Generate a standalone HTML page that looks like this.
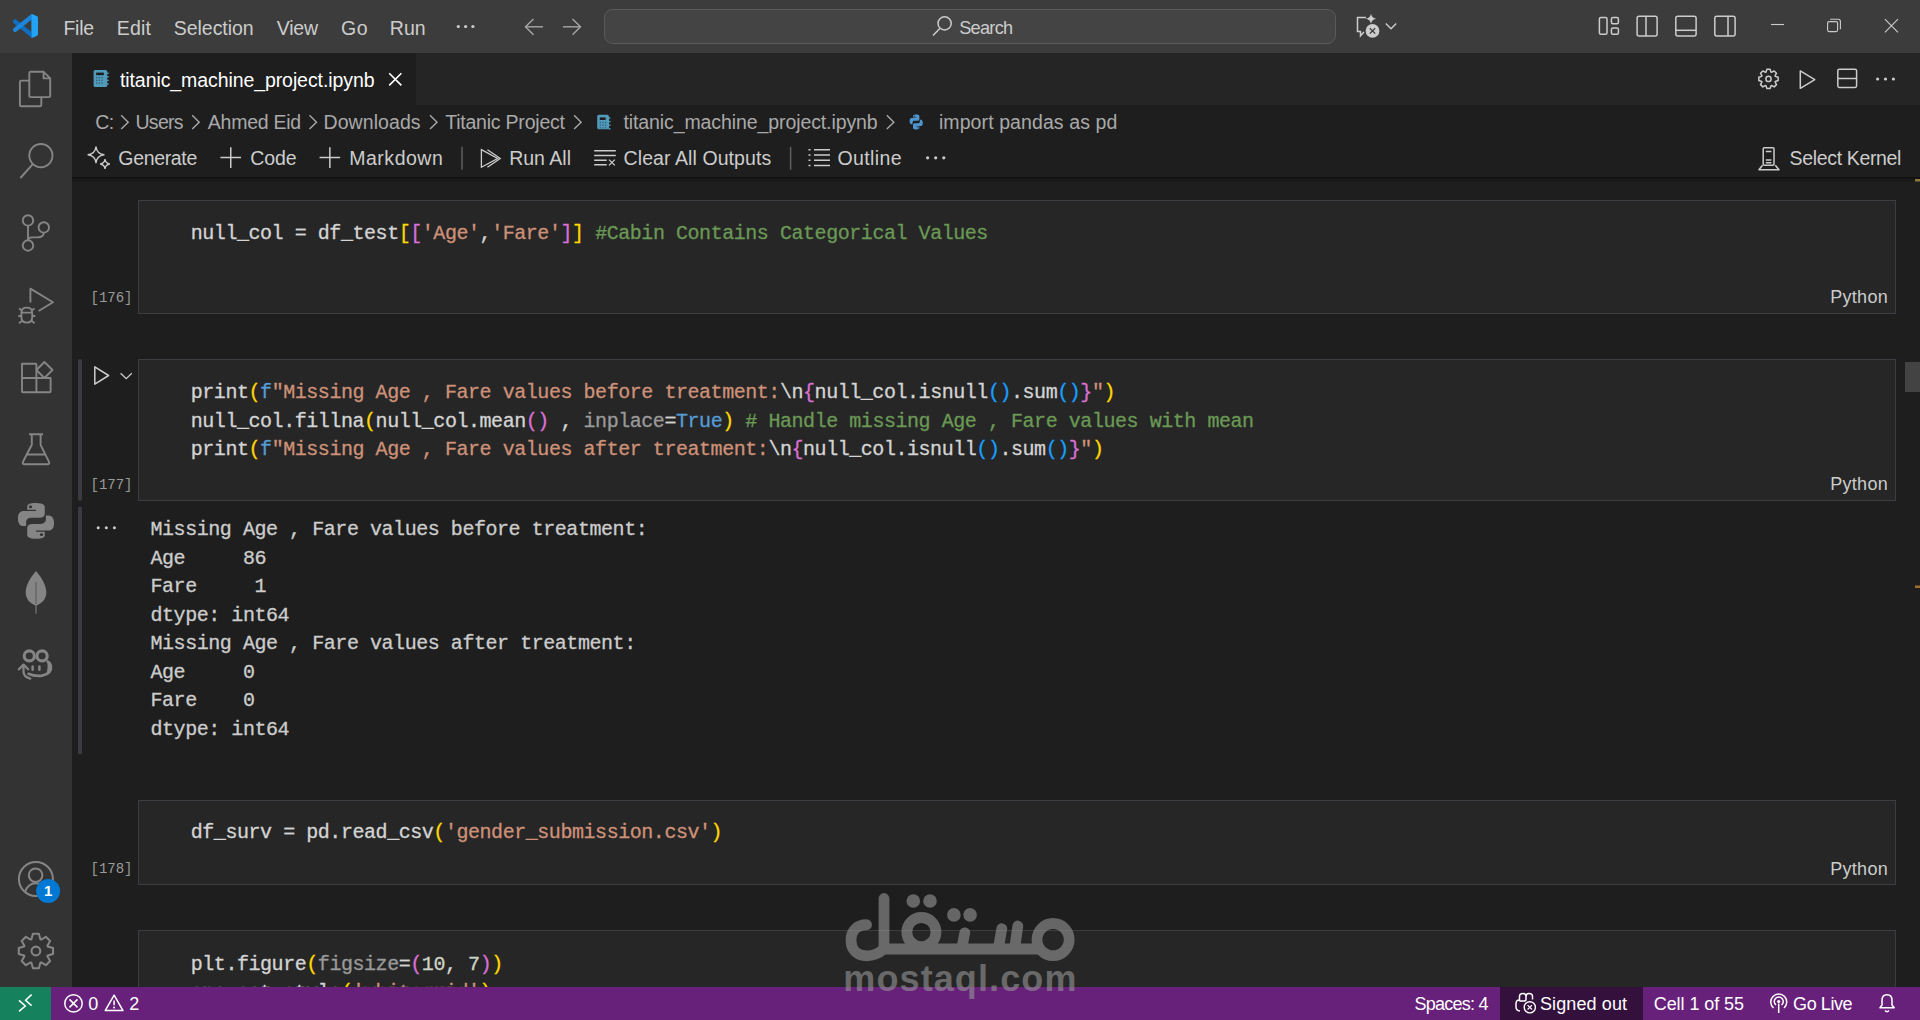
<!DOCTYPE html>
<html><head><meta charset="utf-8"><title>VS Code</title>
<style>
html,body{margin:0;padding:0;}
body{width:1920px;height:1020px;overflow:hidden;background:#1e1e1e;position:relative;font-family:"Liberation Sans",sans-serif;}
svg{position:absolute;left:0;top:0;}
.t{position:absolute;white-space:pre;line-height:1;}
.code{position:absolute;white-space:pre;font-family:"Liberation Mono",monospace;font-size:20px;line-height:28.5px;letter-spacing:-0.45px;-webkit-text-stroke:0.3px currentColor;}
.ec{position:absolute;white-space:pre;font-family:"Liberation Mono",monospace;font-size:14px;line-height:1;color:#9b9b9b;letter-spacing:0px;}
.wm{position:absolute;left:0;top:0;width:1920px;height:1020px;opacity:0.6;}
</style></head><body>
<svg width="1920" height="1020" viewBox="0 0 1920 1020"><defs><linearGradient id="shd" x1="0" y1="0" x2="0" y2="1"><stop offset="0" stop-color="#000" stop-opacity="0.55"/><stop offset="1" stop-color="#000" stop-opacity="0"/></linearGradient></defs>
<rect x="0" y="0" width="1920" height="53" fill="#3c3c3c"/>
<rect x="0" y="53" width="72" height="934" fill="#333333"/>
<rect x="72" y="53" width="1848" height="52" fill="#252526"/>
<rect x="72" y="53" width="344" height="52" fill="#1e1e1e"/>
<rect x="72" y="177" width="1848" height="1.6" fill="#111111"/><rect x="72" y="178.6" width="1848" height="2.6" fill="#181818"/><rect x="72" y="181" width="1848" height="1" fill="#1c1c1c"/>
<rect x="138.5" y="200.5" width="1757" height="113" fill="#262626" stroke="#3c3c42" stroke-width="1"/>
<rect x="138.5" y="359.5" width="1757" height="141" fill="#262626" stroke="#3c3c42" stroke-width="1"/>
<rect x="138.5" y="800.5" width="1757" height="84" fill="#262626" stroke="#3c3c42" stroke-width="1"/>
<rect x="138.5" y="930.5" width="1757" height="120" fill="#262626" stroke="#3c3c42" stroke-width="1"/>
<rect x="78" y="359" width="4" height="142" rx="2" fill="#3a3a40"/>
<rect x="78" y="506.5" width="4" height="248" rx="2" fill="#3a3a40"/>
<rect x="1905" y="362" width="15" height="30" fill="#434343"/>
<rect x="1915" y="179" width="5" height="2.5" fill="#8c7a3c"/>
<rect x="1915" y="585.5" width="5" height="2.5" fill="#a56d2c"/>
<rect x="0" y="987" width="1920" height="33" fill="#68217a"/>
<rect x="0" y="987" width="51" height="33" fill="#16825d"/>
<rect x="1500" y="987" width="143" height="33" fill="#34113d"/>
<path d="M31.6 13.9 L36.8 16.3 Q37.9 16.9 37.9 18.2 L37.9 33.8 Q37.9 35.1 36.8 35.7 L31.6 38.1 Z" fill="#23a3f5"/>
<path d="M15.2 21.6 L32 35.2" stroke="#0f6fc2" stroke-width="4.4" stroke-linecap="round"/>
<path d="M15.2 29.8 L32 16.5" stroke="#1b86dc" stroke-width="4.4" stroke-linecap="round"/>
<path d="M31.6 13.9 L36.8 16.3 Q37.9 16.9 37.9 18.2 L37.9 33.8 Q37.9 35.1 36.8 35.7 L31.6 38.1 Z" fill="#23a3f5"/>
<circle cx="458.3" cy="26.5" r="1.6" fill="#cccccc"/>
<circle cx="465.6" cy="26.5" r="1.6" fill="#cccccc"/>
<circle cx="472.9" cy="26.5" r="1.6" fill="#cccccc"/>
<g stroke="#a6a6a6" stroke-width="1.4" fill="none"><path d="M525.5 26.8 H543"/><path d="M533.5 18.9 L525.5 26.8 L533.5 34.7"/><path d="M563 26.8 H580.5"/><path d="M572.5 18.9 L580.5 26.8 L572.5 34.7"/></g>
<rect x="604.5" y="9.5" width="731" height="34" rx="8" fill="#444444" stroke="#5a5a5a"/>
<g stroke="#cccccc" stroke-width="1.5" fill="none"><circle cx="944.6" cy="23.4" r="6.6"/><path d="M939.8 28.4 L933 35.6"/></g>
<g stroke="#cccccc" stroke-width="1.5" fill="none"><path d="M1366 17.5 H1357.5 V31.5 H1360.5 V35.8 L1364 32"/></g>
<path d="M1371 13.8 Q1371.8 18.2 1376.5 18.8 Q1371.8 19.4 1371 23.8 Q1370.2 19.4 1365.5 18.8 Q1370.2 18.2 1371 13.8Z" fill="#cccccc"/>
<circle cx="1372.5" cy="30.9" r="6.9" fill="#cccccc"/><path d="M1369.8 28.2 L1375.2 33.6 M1375.2 28.2 L1369.8 33.6" stroke="#3c3c3c" stroke-width="1.3"/>
<path d="M1385.8 23.6 L1391 28.8 L1396.2 23.6" stroke="#cccccc" stroke-width="1.4" fill="none"/>
<g stroke="#cccccc" stroke-width="1.5" fill="none"><rect x="1599.4" y="17.6" width="7.6" height="16.6" rx="1.5"/><rect x="1611.4" y="17.6" width="7" height="6.2" rx="1.5"/><rect x="1611.4" y="28" width="7" height="6.2" rx="1.5"/><rect x="1637.1" y="16.2" width="20" height="19.8" rx="2"/><path d="M1646 16.2 V36"/><rect x="1675.8" y="16.2" width="20.3" height="19.8" rx="2"/><path d="M1675.8 30.3 H1696.1"/><rect x="1714.8" y="16.2" width="20.3" height="19.8" rx="2"/><path d="M1728 16.2 V36"/></g>
<g stroke="#cccccc" stroke-width="1.1" fill="none"><path d="M1771 24.5 H1784"/><rect x="1827.6" y="21.6" width="10" height="10" rx="1.5"/><path d="M1830.2 19.3 H1838.2 Q1840.4 19.3 1840.4 21.5 V29.3"/><path d="M1884.9 19.2 L1898 32.3 M1898 19.2 L1884.9 32.3"/></g>
<rect x="93.6" y="70" width="13.6" height="17" rx="1.6" fill="#519aba"/><rect x="96.19999999999999" y="72.6" width="7.6" height="2.6" fill="#1e1e1e"/><rect x="96.0" y="77.0" width="1.3" height="1.3" fill="#2d5f78"/><rect x="98.7" y="77.0" width="1.3" height="1.3" fill="#2d5f78"/><rect x="101.4" y="77.0" width="1.3" height="1.3" fill="#2d5f78"/><rect x="96.0" y="79.7" width="1.3" height="1.3" fill="#2d5f78"/><rect x="98.7" y="79.7" width="1.3" height="1.3" fill="#2d5f78"/><rect x="101.4" y="79.7" width="1.3" height="1.3" fill="#2d5f78"/><rect x="96.0" y="82.4" width="1.3" height="1.3" fill="#2d5f78"/><rect x="98.7" y="82.4" width="1.3" height="1.3" fill="#2d5f78"/><rect x="101.4" y="82.4" width="1.3" height="1.3" fill="#2d5f78"/><rect x="106.69999999999999" y="72.5" width="2" height="1.4" fill="#519aba"/><rect x="106.69999999999999" y="76.1" width="2" height="1.4" fill="#519aba"/><rect x="106.69999999999999" y="79.7" width="2" height="1.4" fill="#519aba"/><rect x="106.69999999999999" y="83.3" width="2" height="1.4" fill="#519aba"/>
<path d="M389.2 73.2 L401.4 85.4 M401.4 73.2 L389.2 85.4" stroke="#ffffff" stroke-width="1.6"/>
<path d="M1778.17 77.30 L1778.17 80.50 L1775.23 81.46 L1775.07 81.85 L1776.47 84.60 L1774.20 86.87 L1771.45 85.47 L1771.06 85.63 L1770.10 88.57 L1766.90 88.57 L1765.94 85.63 L1765.55 85.47 L1762.80 86.87 L1760.53 84.60 L1761.93 81.85 L1761.77 81.46 L1758.83 80.50 L1758.83 77.30 L1761.77 76.34 L1761.93 75.95 L1760.53 73.20 L1762.80 70.93 L1765.55 72.33 L1765.94 72.17 L1766.90 69.23 L1770.10 69.23 L1771.06 72.17 L1771.45 72.33 L1774.20 70.93 L1776.47 73.20 L1775.07 75.95 L1775.23 76.34 Z" stroke="#cccccc" stroke-width="1.5" fill="none" stroke-linejoin="round"/><circle cx="1768.5" cy="78.9" r="2.6" stroke="#cccccc" stroke-width="1.5" fill="none"/>
<path d="M1800.3 70.9 L1814.8 79.6 L1800.3 88.3 Z" stroke="#cccccc" stroke-width="1.5" fill="none" stroke-linejoin="round"/>
<rect x="1837.8" y="69.2" width="18.8" height="18.2" rx="1.6" stroke="#cccccc" stroke-width="1.5" fill="none"/><path d="M1837.8 78.5 H1856.6" stroke="#cccccc" stroke-width="1.5"/>
<circle cx="1877.6" cy="79" r="1.6" fill="#cccccc"/>
<circle cx="1885.5" cy="79" r="1.6" fill="#cccccc"/>
<circle cx="1893.4" cy="79" r="1.6" fill="#cccccc"/>
<path d="M121.19999999999999 115.3 L128.2 122.2 L121.19999999999999 129" stroke="#a9a9a9" stroke-width="1.4" fill="none"/>
<path d="M192.2 115.3 L199.2 122.2 L192.2 129" stroke="#a9a9a9" stroke-width="1.4" fill="none"/>
<path d="M309.5 115.3 L316.5 122.2 L309.5 129" stroke="#a9a9a9" stroke-width="1.4" fill="none"/>
<path d="M430.0 115.3 L437.0 122.2 L430.0 129" stroke="#a9a9a9" stroke-width="1.4" fill="none"/>
<path d="M574.1 115.3 L581.1 122.2 L574.1 129" stroke="#a9a9a9" stroke-width="1.4" fill="none"/>
<path d="M886.85 115.3 L893.85 122.2 L886.85 129" stroke="#a9a9a9" stroke-width="1.4" fill="none"/>
<rect x="597.2" y="114.8" width="11.8" height="14.4" rx="1.6" fill="#519aba"/><rect x="599.8000000000001" y="117.39999999999999" width="5.800000000000001" height="2.6" fill="#1e1e1e"/><rect x="599.6" y="121.8" width="1.3" height="1.3" fill="#2d5f78"/><rect x="602.3000000000001" y="121.8" width="1.3" height="1.3" fill="#2d5f78"/><rect x="605.0" y="121.8" width="1.3" height="1.3" fill="#2d5f78"/><rect x="599.6" y="124.5" width="1.3" height="1.3" fill="#2d5f78"/><rect x="602.3000000000001" y="124.5" width="1.3" height="1.3" fill="#2d5f78"/><rect x="605.0" y="124.5" width="1.3" height="1.3" fill="#2d5f78"/><rect x="599.6" y="127.2" width="1.3" height="1.3" fill="#2d5f78"/><rect x="602.3000000000001" y="127.2" width="1.3" height="1.3" fill="#2d5f78"/><rect x="605.0" y="127.2" width="1.3" height="1.3" fill="#2d5f78"/><rect x="608.5" y="117.3" width="2" height="1.4" fill="#519aba"/><rect x="608.5" y="120.89999999999999" width="2" height="1.4" fill="#519aba"/><rect x="608.5" y="124.5" width="2" height="1.4" fill="#519aba"/><rect x="608.5" y="128.1" width="2" height="1.4" fill="#519aba"/>
<g transform="translate(908.2,114.0) scale(1.0,1.0)"><path d="M7.9 0.5 C4.6 0.5 4.8 1.9 4.8 1.9 V3.4 H8 V3.9 H3.5 C3.5 3.9 1.4 3.7 1.4 7 C1.4 10.3 3.3 10.2 3.3 10.2 H4.4 V8.6 C4.4 8.6 4.3 6.7 6.2 6.7 H9.4 C9.4 6.7 11.2 6.7 11.2 5 V2.2 C11.2 2.2 11.5 0.5 7.9 0.5 Z" fill="#4e94ce"/><path d="M7.9 0.5 C4.6 0.5 4.8 1.9 4.8 1.9 V3.4 H8 V3.9 H3.5 C3.5 3.9 1.4 3.7 1.4 7 C1.4 10.3 3.3 10.2 3.3 10.2 H4.4 V8.6 C4.4 8.6 4.3 6.7 6.2 6.7 H9.4 C9.4 6.7 11.2 6.7 11.2 5 V2.2 C11.2 2.2 11.5 0.5 7.9 0.5 Z" fill="#4e94ce" transform="rotate(180 8 8)"/><circle cx="6" cy="2.2" r="0.6" fill="#1e1e1e"/><circle cx="10" cy="13.8" r="0.6" fill="#1e1e1e"/></g>
<path d="M96 146.9 Q96.948 153.852 103.9 154.8 Q96.948 155.74800000000002 96 162.70000000000002 Q95.052 155.74800000000002 88.1 154.8 Q95.052 153.852 96 146.9 Z" stroke="#cccccc" stroke-width="1.4" fill="none" stroke-linejoin="round"/><path d="M105 159.2 Q105.576 163.424 109.8 164 Q105.576 164.576 105 168.8 Q104.424 164.576 100.2 164 Q104.424 163.424 105 159.2 Z" stroke="#cccccc" stroke-width="1.3" fill="none"/>
<path d="M220.45 157.6 H241.05 M230.75 147.3 V167.9" stroke="#cccccc" stroke-width="1.5"/>
<path d="M319.55 157.6 H340.15000000000003 M329.85 147.3 V167.9" stroke="#cccccc" stroke-width="1.5"/>
<path d="M462 146.8 V169.8" stroke="#5f5f5f" stroke-width="1.5"/>
<path d="M790.6 146.8 V169.8" stroke="#5f5f5f" stroke-width="1.5"/>
<g stroke="#cccccc" stroke-width="1.3" fill="none" stroke-linejoin="miter"><path d="M481.4 149.6 L497.6 158.5 L481.4 167.2 Z"/><path d="M487.4 149.8 L500.2 158.5 L487.4 167.2"/></g>
<g stroke="#cccccc" stroke-width="1.5" fill="none"><path d="M594.2 150.8 H615.8 M594.2 155.6 H615.8 M594.2 160.2 H606.7 M594.2 164.8 H606.7"/><path d="M609 159.6 L614.8 165.4 M614.8 159.6 L609 165.4" stroke-width="1.3"/></g>
<g stroke="#cccccc" stroke-width="1.5" fill="none"><path d="M814 149.8 H830 M814 155 H830 M814 160.2 H830 M814 165.4 H830"/><path d="M808.5 149.8 H810.5 M808.5 155 H810.5 M808.5 160.2 H810.5 M808.5 165.4 H810.5"/></g>
<circle cx="927.6" cy="157.8" r="1.6" fill="#cccccc"/>
<circle cx="935.7" cy="157.8" r="1.6" fill="#cccccc"/>
<circle cx="943.8" cy="157.8" r="1.6" fill="#cccccc"/>
<g stroke="#cccccc" stroke-width="1.5" fill="none" stroke-linejoin="round"><rect x="1763.2" y="147.8" width="10.8" height="17.4" rx="1"/><path d="M1765.8 151.4 H1771.4 M1765.8 160 H1771.4 M1765.8 162.8 H1771.4"/><path d="M1762.5 165.2 L1759 169.8 H1779 L1775.3 165.2"/></g>
<path d="M94.8 366.8 L108.6 375.5 L94.8 384.2 Z" stroke="#cccccc" stroke-width="1.5" fill="none" stroke-linejoin="round"/>
<path d="M120.6 373.3 L126.2 378.6 L131.8 373.3" stroke="#cccccc" stroke-width="1.3" fill="none"/>
<circle cx="98.2" cy="527.8" r="1.5" fill="#cccccc"/>
<circle cx="106.3" cy="527.8" r="1.5" fill="#cccccc"/>
<circle cx="114.4" cy="527.8" r="1.5" fill="#cccccc"/>
<g stroke="#858585" stroke-width="1.9" fill="none" stroke-linejoin="round">
<path d="M30.7 71.8 H43.6 L50.2 78.4 V95.9 Q50.2 97.1 49 97.1 H30.7 Q29.3 97.1 29.3 95.9 V73 Q29.3 71.8 30.7 71.8 Z"/><path d="M43.6 71.8 V78.4 H50.2"/>
<path d="M29.3 80.6 H21.3 Q19.9 80.6 19.9 82 V105 Q19.9 106.3 21.3 106.3 H40 Q41.3 106.3 41.3 105 V97.1"/>
<circle cx="40.9" cy="155.6" r="11.6"/><path d="M32.8 164.2 L20.4 178"/>
<circle cx="28" cy="220.4" r="5.2"/><circle cx="43.8" cy="227.4" r="5.2"/><circle cx="28" cy="245.5" r="5.2"/><path d="M28 225.6 V240.3"/><path d="M43.8 232.6 C43.8 236.4 41.2 237.4 37.5 237.4 H32 Q28 237.4 28 241"/>
<path d="M30.4 302.5 V288.6 L53 302.3 L38.6 311"/>
<path d="M21.4 312.5 Q21.4 307.6 26.8 307.6 Q32.2 307.6 32.2 312.5 V317 Q32.2 322.6 26.8 322.6 Q21.4 322.6 21.4 317 Z"/><path d="M21.4 312.6 H32.2 M18.3 316 H21.4 M32.2 316 H35.3 M19 308.5 L22.5 310.6 M34.6 308.5 L31.1 310.6 M19 323.3 L22.5 320.6 M34.6 323.3 L31.1 320.6"/>
<path d="M22 363.8 H35.6 Q36.4 363.8 36.4 364.6 V392.2 H22.8 Q22 392.2 22 391.4 Z"/><path d="M22 378 H50.6 V391.4 Q50.6 392.2 49.8 392.2 H36.4"/><path d="M44.4 362 L52.5 370 L44.4 378 L36.4 370 Z"/>
<path d="M29 434.3 H43 M31.8 434.3 V444.8 L23 461.8 Q22 464.3 24.6 464.3 H47.4 Q50 464.3 49 461.8 L40.6 444.8 V434.3 M26.6 454.5 H45.4"/>
</g>
<g transform="translate(14.079999999999998,501.67999999999995) scale(2.74,2.39)"><path d="M7.9 0.5 C4.6 0.5 4.8 1.9 4.8 1.9 V3.4 H8 V3.9 H3.5 C3.5 3.9 1.4 3.7 1.4 7 C1.4 10.3 3.3 10.2 3.3 10.2 H4.4 V8.6 C4.4 8.6 4.3 6.7 6.2 6.7 H9.4 C9.4 6.7 11.2 6.7 11.2 5 V2.2 C11.2 2.2 11.5 0.5 7.9 0.5 Z" fill="#858585"/><path d="M7.9 0.5 C4.6 0.5 4.8 1.9 4.8 1.9 V3.4 H8 V3.9 H3.5 C3.5 3.9 1.4 3.7 1.4 7 C1.4 10.3 3.3 10.2 3.3 10.2 H4.4 V8.6 C4.4 8.6 4.3 6.7 6.2 6.7 H9.4 C9.4 6.7 11.2 6.7 11.2 5 V2.2 C11.2 2.2 11.5 0.5 7.9 0.5 Z" fill="#858585" transform="rotate(180 8 8)"/><circle cx="6" cy="2.2" r="0.6" fill="#333333"/><circle cx="10" cy="13.8" r="0.6" fill="#333333"/></g>
<path d="M36 571 C30 578 25.7 585.5 25.7 592.6 C25.7 599 29.6 603 35.5 605.6 V613.8 H36.5 V605.6 C42.4 603 46.3 599 46.3 592.6 C46.3 585.5 42 578 36 571 Z" fill="#858585"/><path d="M36 582 V604" stroke="#5c5c5c" stroke-width="1.1"/>
<g stroke="#858585" stroke-width="2.8" fill="none" stroke-linecap="round" stroke-linejoin="round"><ellipse cx="29.3" cy="655.9" rx="5.1" ry="5" stroke-width="3.1"/><ellipse cx="42.1" cy="655.9" rx="5.1" ry="5" stroke-width="3.1"/><path d="M18.9 669.3 L23.5 664.6 L28.2 669.3" stroke-width="2.3"/><path d="M23.5 665.5 V671.5 Q23.5 677 30.3 678.6" stroke-width="2.3"/><path d="M28.5 673.8 Q35 676.6 42 675.6 Q50.8 674 50.8 667.5 Q50.8 663 47.6 661.5" stroke-width="2.6"/><path d="M32.6 666.4 V669.8 M39.4 666.4 V669.8" stroke-width="2.5"/></g>
<path d="M47 661 Q52.2 662.5 52.2 668 Q52.2 673 46 675 Q48.5 668 47 661 Z" fill="#858585"/>
<g stroke="#858585" stroke-width="2" fill="none"><circle cx="35.9" cy="879" r="17"/><circle cx="35.6" cy="875.2" r="6.8"/><path d="M24.8 892.4 Q28 883.3 35.8 883.3 Q43.6 883.3 46.8 892.4"/></g>
<circle cx="48.1" cy="891" r="12" fill="#0078d4"/>
<path d="M53.04 948.01 L53.04 953.99 L47.69 955.45 L47.38 956.19 L50.14 961.01 L45.91 965.24 L41.09 962.48 L40.35 962.79 L38.89 968.14 L32.91 968.14 L31.45 962.79 L30.71 962.48 L25.89 965.24 L21.66 961.01 L24.42 956.19 L24.11 955.45 L18.76 953.99 L18.76 948.01 L24.11 946.55 L24.42 945.81 L21.66 940.99 L25.89 936.76 L30.71 939.52 L31.45 939.21 L32.91 933.86 L38.89 933.86 L40.35 939.21 L41.09 939.52 L45.91 936.76 L50.14 940.99 L47.38 945.81 L47.69 946.55 Z" stroke="#858585" stroke-width="2" fill="none" stroke-linejoin="round"/><circle cx="35.9" cy="951" r="4.4" stroke="#858585" stroke-width="2.1" fill="none"/>
<g stroke="#ffffff" stroke-width="1.5" fill="none"><path d="M19 1000.4 L25.3 1006 L19 1011.4 M31.6 994.6 L25.6 1000.2 L31.6 1005.6"/><circle cx="73.5" cy="1003.4" r="8.7"/><path d="M69.5 999.4 L77.5 1007.4 M77.5 999.4 L69.5 1007.4"/><path d="M114.1 995.2 L123 1010.6 H105.2 Z" stroke-linejoin="round"/><path d="M114.1 1000.4 V1005.2"/></g><circle cx="114.1" cy="1007.6" r="1" fill="#fff"/>
<g stroke="#ffffff" stroke-width="1.5" fill="none"><path d="M1519 1000 Q1516 1000 1516 1004 V1007 Q1516 1010.5 1520 1011 M1519.5 996.5 Q1519.5 993.5 1523 993.5 Q1526 993.5 1526 996.5 V999.5 Q1526 1001 1524 1001 H1520 Q1519.5 1001 1519.5 999.5 Z M1526 996.5 Q1526 993.5 1529 993.5 Q1532.5 993.5 1532.5 996.5 V999.5"/></g>
<circle cx="1529.8" cy="1007.3" r="5.6" fill="#34113d" stroke="#ffffff" stroke-width="1.4"/><path d="M1527.6 1005.1 L1532 1009.5 M1532 1005.1 L1527.6 1009.5" stroke="#ffffff" stroke-width="1.2"/>
<g stroke="#ffffff" stroke-width="1.5" fill="none"><path d="M1773.5 1008 A8 8 0 1 1 1784 1008"/><path d="M1776 1005 A4.5 4.5 0 1 1 1781.5 1005"/><path d="M1778.7 1003.5 V1013"/></g><circle cx="1778.7" cy="1001.5" r="1.6" fill="#fff"/>
<g stroke="#ffffff" stroke-width="1.5" fill="none"><path d="M1880 1007.8 H1894.2 L1892 1005 V1000.5 Q1892 994.8 1887 994.8 Q1882 994.8 1882 1000.5 V1005 Z" stroke-linejoin="round"/><path d="M1885 1010.6 Q1887 1012.8 1889 1010.6"/></g>
</svg>
<div style="position:absolute;left:0;top:0;width:1920px;height:987px;overflow:hidden"><div class="t" style="left:63.44px;top:18.69px;font-size:19.5px;color:#cccccc;letter-spacing:-0.252px">File</div><div class="t" style="left:116.74px;top:18.69px;font-size:19.5px;color:#cccccc;letter-spacing:0.206px">Edit</div><div class="t" style="left:173.82px;top:18.69px;font-size:19.5px;color:#cccccc;letter-spacing:-0.049px">Selection</div><div class="t" style="left:276.80px;top:18.69px;font-size:19.5px;color:#cccccc;letter-spacing:-0.209px">View</div><div class="t" style="left:341.02px;top:18.69px;font-size:19.5px;color:#cccccc;letter-spacing:0.622px">Go</div><div class="t" style="left:389.74px;top:18.69px;font-size:19.5px;color:#cccccc;letter-spacing:0.074px">Run</div><div class="t" style="left:959.18px;top:18.59px;font-size:18.2px;color:#cccccc;letter-spacing:-0.738px">Search</div><div class="t" style="left:119.96px;top:70.69px;font-size:19.5px;color:#ffffff;letter-spacing:-0.084px">titanic_machine_project.ipynb</div><div class="t" style="left:95.28px;top:112.89px;font-size:19.5px;color:#a9a9a9;letter-spacing:-0.520px">C:</div><div class="t" style="left:135.44px;top:112.89px;font-size:19.5px;color:#a9a9a9;letter-spacing:-0.688px">Users</div><div class="t" style="left:207.80px;top:112.89px;font-size:19.5px;color:#a9a9a9;letter-spacing:-0.248px">Ahmed Eid</div><div class="t" style="left:323.54px;top:112.89px;font-size:19.5px;color:#a9a9a9;letter-spacing:0.077px">Downloads</div><div class="t" style="left:445.21px;top:112.89px;font-size:19.5px;color:#a9a9a9;letter-spacing:-0.219px">Titanic Project</div><div class="t" style="left:623.46px;top:112.89px;font-size:19.5px;color:#a9a9a9;letter-spacing:-0.096px">titanic_machine_project.ipynb</div><div class="t" style="left:938.93px;top:112.89px;font-size:19.5px;color:#a9a9a9;letter-spacing:0.093px">import pandas as pd</div><div class="t" style="left:118.33px;top:149.49px;font-size:19.5px;color:#cccccc;letter-spacing:-0.337px">Generate</div><div class="t" style="left:250.22px;top:149.49px;font-size:19.5px;color:#cccccc;letter-spacing:-0.050px">Code</div><div class="t" style="left:349.24px;top:149.49px;font-size:19.5px;color:#cccccc;letter-spacing:0.519px">Markdown</div><div class="t" style="left:509.14px;top:149.49px;font-size:19.5px;color:#cccccc;letter-spacing:0.018px">Run All</div><div class="t" style="left:623.62px;top:149.49px;font-size:19.5px;color:#cccccc;letter-spacing:0.076px">Clear All Outputs</div><div class="t" style="left:837.52px;top:149.49px;font-size:19.5px;color:#cccccc;letter-spacing:0.390px">Outline</div><div class="t" style="left:1789.62px;top:149.49px;font-size:19.5px;color:#cccccc;letter-spacing:-0.349px">Select Kernel</div><div class="t" style="left:1830.16px;top:288.06px;font-size:18px;color:#cccccc;letter-spacing:0.308px">Python</div><div class="t" style="left:1830.16px;top:475.46px;font-size:18px;color:#cccccc;letter-spacing:0.308px">Python</div><div class="t" style="left:1830.16px;top:859.76px;font-size:18px;color:#cccccc;letter-spacing:0.308px">Python</div>
<div class="code" style="left:190.75px;top:220.4px;color:#d4d4d4">null_col = df_test<span style="color:#ffd700">[</span><span style="color:#da70d6">[</span><span style="color:#ce9178">&#x27;Age&#x27;</span>,<span style="color:#ce9178">&#x27;Fare&#x27;</span><span style="color:#da70d6">]</span><span style="color:#ffd700">]</span><span style="color:#6a9955"> #Cabin Contains Categorical Values</span></div><div class="code" style="left:190.75px;top:379.4px;color:#d4d4d4">print<span style="color:#ffd700">(</span><span style="color:#569cd6">f</span><span style="color:#ce9178">&quot;Missing Age , Fare values before treatment:</span>\n<span style="color:#da70d6">{</span>null_col.isnull<span style="color:#179fff">()</span>.sum<span style="color:#179fff">()</span><span style="color:#da70d6">}</span><span style="color:#ce9178">&quot;</span><span style="color:#ffd700">)</span>
null_col.fillna<span style="color:#ffd700">(</span>null_col.mean<span style="color:#da70d6">()</span> , <span style="color:#9a9a9a">inplace</span>=<span style="color:#569cd6">True</span><span style="color:#ffd700">)</span><span style="color:#6a9955"> # Handle missing Age , Fare values with mean</span>
print<span style="color:#ffd700">(</span><span style="color:#569cd6">f</span><span style="color:#ce9178">&quot;Missing Age , Fare values after treatment:</span>\n<span style="color:#da70d6">{</span>null_col.isnull<span style="color:#179fff">()</span>.sum<span style="color:#179fff">()</span><span style="color:#da70d6">}</span><span style="color:#ce9178">&quot;</span><span style="color:#ffd700">)</span></div><div class="code" style="left:150.5px;top:516px;color:#cccccc">Missing Age , Fare values before treatment:
Age     86
Fare     1
dtype: int64
Missing Age , Fare values after treatment:
Age     0
Fare    0
dtype: int64</div><div class="code" style="left:190.75px;top:819.4px;color:#d4d4d4">df_surv = pd.read_csv<span style="color:#ffd700">(</span><span style="color:#ce9178">&#x27;gender_submission.csv&#x27;</span><span style="color:#ffd700">)</span></div><div class="code" style="left:190.75px;top:950.8px;color:#d4d4d4">plt.figure<span style="color:#ffd700">(</span><span style="color:#9a9a9a">figsize</span>=<span style="color:#da70d6">(</span><span style="color:#cdd4c4">10</span>, <span style="color:#cdd4c4">7</span><span style="color:#da70d6">)</span><span style="color:#ffd700">)</span>
sns.set_style<span style="color:#ffd700">(</span><span style="color:#ce9178">&#x27;whitegrid&#x27;</span><span style="color:#ffd700">)</span></div><div class="ec" style="left:90.5px;top:291.27px">[176]</div><div class="ec" style="left:90.5px;top:478.27px">[177]</div><div class="ec" style="left:90.5px;top:861.77px">[178]</div></div>
<div class="t" style="left:88.28px;top:994.66px;font-size:18px;color:#ffffff">0</div><div class="t" style="left:129.30px;top:994.66px;font-size:18px;color:#ffffff">2</div><div class="t" style="left:1414.59px;top:994.66px;font-size:18px;color:#ffffff;letter-spacing:-0.769px">Spaces: 4</div><div class="t" style="left:1539.99px;top:994.66px;font-size:18px;color:#ffffff;letter-spacing:0.118px">Signed out</div><div class="t" style="left:1653.70px;top:994.66px;font-size:18px;color:#ffffff;letter-spacing:-0.060px">Cell 1 of 55</div><div class="t" style="left:1793.10px;top:994.66px;font-size:18px;color:#ffffff;letter-spacing:-0.432px">Go Live</div>
<div class="t" style="left:44px;top:883.30px;font-size:15px;font-weight:bold;color:#fff">1</div>
<div class="wm"><svg width="1920" height="1020" viewBox="0 0 1920 1020">
<g stroke="#969696" stroke-width="10.8" fill="none" stroke-linecap="round" stroke-linejoin="round"><path d="M884 898.5 V946"/><path d="M866.6 924.7 C857 924.7 851 931 851 940.25 C851 949.5 857 955.8 866.6 955.8 Q876 955.8 884 949 H1038"/><circle cx="921.4" cy="932.1" r="14.6"/><path d="M964.8 932.8 L962.2 946 M1001.8 928.7 L998.8 946 M1017.8 926 L1015 946"/><circle cx="1053.1" cy="939.6" r="16.1"/></g>
<circle cx="913.3" cy="901" r="6.8" fill="#969696"/>
<circle cx="930" cy="901" r="6.8" fill="#969696"/>
<circle cx="953.9" cy="914.9" r="6.8" fill="#969696"/>
<circle cx="970.1" cy="914.9" r="6.8" fill="#969696"/>
</svg><div class="t" style="left:843.26px;top:961.22px;font-size:36px;font-weight:bold;letter-spacing:1.118px;color:#969696">mostaql.com</div></div>
</body></html>
